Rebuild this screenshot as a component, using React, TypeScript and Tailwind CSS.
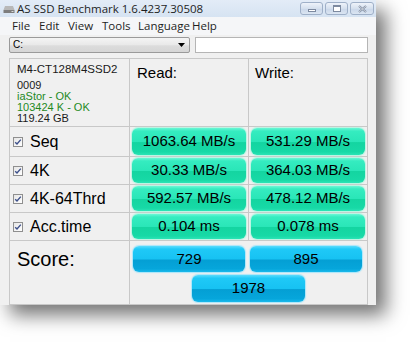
import React from "react";

const UI = { fontFamily: '"Open Sans", "Noto Sans", sans-serif' };
const SANS = { fontFamily: '"Liberation Sans", Arial, sans-serif' };

const GREEN =
  "linear-gradient(to bottom, #6af7d6 0%, #35ecc0 12%, #2ae6b8 50%, #14d5a1 54%, #17d9a6 88%, #2be4b6 100%)";
const BLUE =
  "linear-gradient(to bottom, #5adcfd 0%, #1fc9f7 12%, #17c2f2 50%, #049fd4 54%, #06a6db 88%, #1ab9ec 100%)";

const ROWS = [
  { label: "Seq", read: "1063.64 MB/s", write: "531.29 MB/s", h: "h-[29px]" },
  { label: "4K", read: "30.33 MB/s", write: "364.03 MB/s", h: "h-[27px]" },
  { label: "4K-64Thrd", read: "592.57 MB/s", write: "478.12 MB/s", h: "h-[27px]" },
  { label: "Acc.time", read: "0.104 ms", write: "0.078 ms", h: "h-[27px]" },
];

const MENU = [
  { label: "File", w: "w-[27px]" },
  { label: "Edit", w: "w-[29px]" },
  { label: "View", w: "w-[34px]" },
  { label: "Tools", w: "w-[36px]" },
  { label: "Language", w: "w-[54px]" },
  { label: "Help", w: "w-[30px]" },
];

function Pill({ value, bg, glow }: { value: string; bg: string; glow: string }) {
  return (
    <div
      className="w-full h-full rounded-[6px] flex items-center justify-center text-[15px] text-black"
      style={{ ...SANS, background: bg, boxShadow: glow }}
    >
      {value}
    </div>
  );
}

function Check() {
  return (
    <div className="w-[10px] h-[10px] border border-[#8f8f8f] bg-gradient-to-br from-[#e6e6e6] to-white flex items-center justify-center">
      <svg width="8" height="8" viewBox="0 0 8 8">
        <path d="M1.2 4.2 L3 6 L6.8 1.6" fill="none" stroke="#3c4f8a" strokeWidth="1.4" />
      </svg>
    </div>
  );
}

function WinButton({ children, w }: { children: React.ReactNode; w: string }) {
  return (
    <div
      className={`${w} h-[13px] rounded-[3px] border border-[#9fb0c8] flex items-center justify-center`}
      style={{ background: "linear-gradient(to bottom, #eef3fa, #d5e0ee 50%, #cbd8ea 55%, #dbe5f2)" }}
    >
      {children}
    </div>
  );
}

export default function App() {
  return (
    <div className="w-[410px] h-[343px] bg-white overflow-hidden">
      <div
        className="w-[376px] h-[305px] bg-[#f0f0f0] flex flex-col"
        style={{ boxShadow: "10px 10px 18px rgba(0,0,0,0.55)" }}
      >
        {/* Title bar */}
        <div
          className="h-[17px] flex items-center pl-[3px] pr-[2px]"
          style={{ background: "linear-gradient(to bottom, #e3ecf7, #d6e3f2)" }}
        >
          <svg width="12" height="10" viewBox="0 0 12 10" className="mr-[2px]">
            <path d="M2 2 L10 2 L11.5 6 L0.5 6 Z" fill="#b8b8b8" />
            <rect x="0.5" y="6" width="11" height="3" fill="#7d7d7d" />
            <rect x="8.5" y="7" width="2" height="1" fill="#d8d8d8" />
          </svg>
          <span className="text-[11.5px] text-[#1e1e1e] leading-none" style={UI}>
            AS SSD Benchmark 1.6.4237.30508
          </span>
          <div className="ml-auto flex gap-[2px]">
            <WinButton w="w-[23px]">
              <div className="w-[8px] h-[3px] border border-[#7d8aa0] bg-white mt-[3px]" />
            </WinButton>
            <WinButton w="w-[23px]">
              <div className="w-[8px] h-[7px] border border-[#7d8aa0] border-t-2 bg-white" />
            </WinButton>
            <WinButton w="w-[24px]">
              <svg width="9" height="8" viewBox="0 0 9 8">
                <path d="M1 1 L8 7 M8 1 L1 7" stroke="#7d8aa0" strokeWidth="2" />
                <path d="M1 1 L8 7 M8 1 L1 7" stroke="#ffffff" strokeWidth="0.6" />
              </svg>
            </WinButton>
          </div>
        </div>

        {/* Menu bar */}
        <div className="h-[18px] flex items-center pl-[12px] bg-[#f5f6f8]" style={UI}>
          {MENU.map((m) => (
            <span key={m.label} className={`${m.w} text-[11.5px] text-[#1e1e1e] leading-none`}>
              {m.label}
            </span>
          ))}
        </div>

        {/* Drive selector */}
        <div className="flex items-center pl-[9px] mt-[2px] gap-[5px]">
          <div
            className="w-[181px] h-[16px] rounded-[2px] border border-[#9a9a9a] flex items-center pl-[3px] pr-[4px]"
            style={{ background: "linear-gradient(to bottom, #f4f4f4, #e9e9e9 50%, #dcdcdc 55%, #d6d6d6)" }}
          >
            <span className="text-[10px] text-black leading-none" style={SANS}>
              C:
            </span>
            <svg width="7" height="4" viewBox="0 0 7 4" className="ml-auto">
              <path d="M0 0 L7 0 L3.5 4 Z" fill="#000" />
            </svg>
          </div>
          <div className="w-[173px] h-[16px] border border-[#b5b5b5] bg-white" />
        </div>

        {/* Results grid */}
        <div className="ml-[9px] mt-[5px] w-[359px] bg-[#c8c8c8] p-px flex flex-col gap-px">
          <div className="flex gap-px h-[67px]">
            <div className="w-[119px] bg-[#f0f0f0] pl-[7px] pt-[5px] text-[11px] leading-[11px]" style={SANS}>
              <div className="text-[#1a1a1a] text-[11.5px] mb-[5px]">M4-CT128M4SSD2</div>
              <div className="text-[#1a1a1a]">0009</div>
              <div className="text-[#1f8a1f]">iaStor - OK</div>
              <div className="text-[#1f8a1f]">103424 K - OK</div>
              <div className="text-[#1a1a1a]">119.24 GB</div>
            </div>
            <div className="w-[118px] bg-[#f0f0f0] pl-[7px] pt-[3px] text-[15px] text-black" style={SANS}>
              Read:
            </div>
            <div className="w-[118px] bg-[#f0f0f0] pl-[6px] pt-[3px] text-[15px] text-black" style={SANS}>
              Write:
            </div>
          </div>

          {ROWS.map((r) => (
            <div key={r.label} className={`flex gap-px ${r.h}`}>
              <div className="w-[119px] bg-[#f0f0f0] flex items-center pl-[3px] gap-[7px]">
                <Check />
                <span className="text-[16px] text-black" style={SANS}>
                  {r.label}
                </span>
              </div>
              <div className="w-[118px] bg-[#f0f0f0] px-[2px] py-[1px]">
                <Pill value={r.read} bg={GREEN} glow="0 0 1px 1px #b6f5e2" />
              </div>
              <div className="w-[118px] bg-[#f0f0f0] px-[2px] py-[1px]">
                <Pill value={r.write} bg={GREEN} glow="0 0 1px 1px #b6f5e2" />
              </div>
            </div>
          ))}

          <div className="flex gap-px h-[63px]">
            <div className="w-[119px] bg-[#f0f0f0] pl-[7px] pt-[3px] text-[20px] text-black" style={SANS}>
              Score:
            </div>
            <div className="w-[237px] bg-[#f0f0f0] pt-[5px] flex flex-col items-center gap-[3px]">
              <div className="flex gap-[5px] h-[26px] ml-[-2px]">
                <div className="w-[112px]">
                  <Pill value="729" bg={BLUE} glow="0 0 1px 1px #a9e6fa" />
                </div>
                <div className="w-[112px]">
                  <Pill value="895" bg={BLUE} glow="0 0 1px 1px #a9e6fa" />
                </div>
              </div>
              <div className="w-[113px] h-[27px]">
                <Pill value="1978" bg={BLUE} glow="0 0 1px 1px #a9e6fa" />
              </div>
            </div>
          </div>
        </div>
      </div>
    </div>
  );
}
